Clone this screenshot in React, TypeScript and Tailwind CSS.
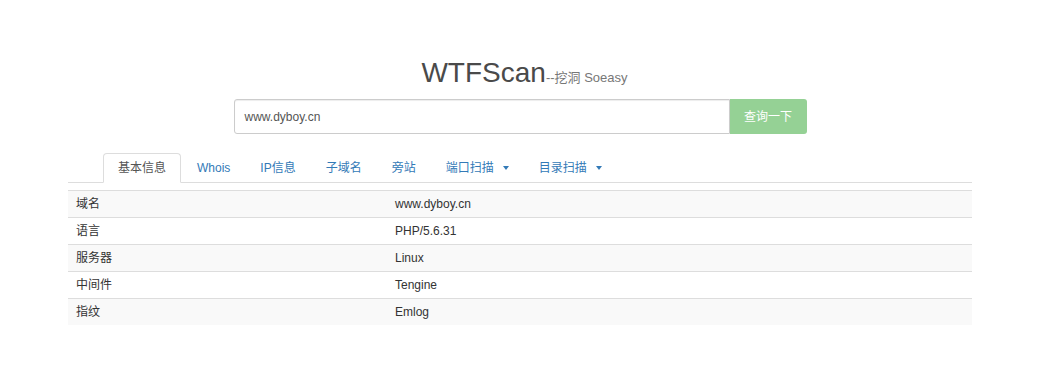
import React from "react";

const tabs = [
  { label: "基本信息", active: true },
  { label: "Whois" },
  { label: "IP信息" },
  { label: "子域名" },
  { label: "旁站" },
  { label: "端口扫描", dropdown: true },
  { label: "目录扫描", dropdown: true },
];

const rows = [
  ["域名", "www.dyboy.cn"],
  ["语言", "PHP/5.6.31"],
  ["服务器", "Linux"],
  ["中间件", "Tengine"],
  ["指纹", "Emlog"],
];

const App = () => {
  return (
    <main
      className="w-[1049px] h-[389px] bg-white text-[#333] text-[12px] pt-[57px]"
      style={{ fontFamily: '"Liberation Sans", Arial, "Noto Sans CJK SC", sans-serif' }}
    >
      <h1 className="text-center leading-[31px] text-[28px] text-[#4a4a4a]">
        WTFScan
        <small className="text-[13px] leading-none text-[#777]">--挖洞 Soeasy</small>
      </h1>

      <div className="ml-[68px] w-[904px]">
        <div className="mx-auto mt-[11px] flex w-[573px] h-[35px]">
          <div className="flex-1 flex items-center border border-[#ccc] rounded-l-[3px] px-[10px] text-[#555] shadow-[inset_0_1px_1px_rgba(0,0,0,0.075)]">
            www.dyboy.cn
          </div>
          <button className="w-[77px] rounded-r-[3px] bg-[#95d195] text-white text-[12px]">
            查询一下
          </button>
        </div>

        <ul className="mt-[19px] flex h-[30px] border-b border-[#ddd] pl-[35px]">
          {tabs.map((tab) => (
            <li key={tab.label} className="mr-[2px] -mb-px">
              <a
                className={
                  tab.active
                    ? "flex items-center h-[30px] px-[14px] rounded-t-[4px] border border-[#ddd] border-b-white bg-white text-[#555]"
                    : "flex items-center h-[30px] px-[14px] text-[#337ab7]"
                }
              >
                {tab.label}
                {tab.dropdown && (
                  <span className="ml-[9px] inline-block w-0 h-0 border-t-[4px] border-t-[#337ab7] border-x-[3px] border-x-transparent" />
                )}
              </a>
            </li>
          ))}
        </ul>

        <div className="mt-[7px]">
          {rows.map(([k, v], i) => (
            <div
              key={k}
              className={`grid grid-cols-[319px_1fr] h-[27px] items-center border-t border-[#ddd] ${
                i % 2 === 0 ? "bg-[#f9f9f9]" : "bg-white"
              }`}
            >
              <div className="px-[8px]">{k}</div>
              <div className="px-[8px]">{v}</div>
            </div>
          ))}
        </div>
      </div>
    </main>
  );
};

export default App;
